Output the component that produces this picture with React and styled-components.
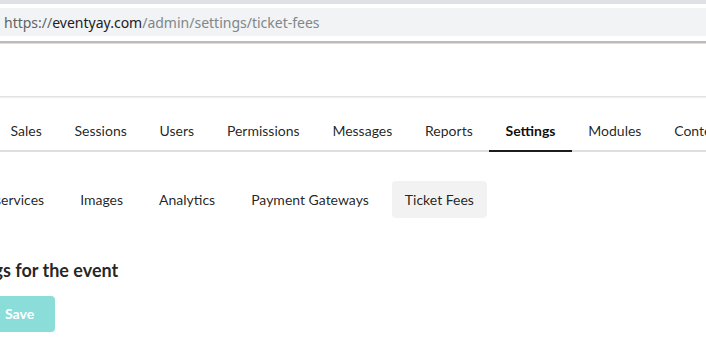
import React from "react";
import styled, { createGlobalStyle } from "styled-components";

const Global = createGlobalStyle`
  html, body { margin: 0; padding: 0; background: #fff; overflow: hidden; }
  body { font-family: Lato, "Helvetica Neue", Arial, sans-serif; font-size: 14px; }
`;

const Page = styled.div`
  width: 706px;
  height: 359px;
  overflow: hidden;
  background: #fff;
`;

const BrowserTop = styled.div`
  height: 4px;
  background: #dfe1e5;
`;

const UrlRow = styled.div`
  padding: 4px 0 5px;
  border-bottom: 2px solid #bcbcbc;
  box-shadow: 0 1px 0 #dcdcdc;
`;

const UrlField = styled.div`
  height: 28px;
  background: #f1f3f4;
  display: flex;
  align-items: center;
  padding-left: 4px;
  font-family: "Noto Sans", "Open Sans", sans-serif;
  font-size: 14px;
  color: #80868b;
  white-space: nowrap;
`;

const UrlPart = styled.span`
  color: ${(p) => p.$c};
`;

const TopBar = styled.div`
  height: 53px;
  border-bottom: 1px solid #e3e3e3;
  box-shadow: 0 1px 1px rgba(0, 0, 0, 0.06);
`;

const Main = styled.div`
  padding-top: 15px;
`;

const PointingMenu = styled.nav`
  display: flex;
  border-bottom: 2px solid rgba(34, 36, 38, 0.15);
  margin-left: ${(p) => p.$shift}px;
  width: 900px;
`;

const PointItem = styled.a`
  padding: 12px 16.4px;
  line-height: 1;
  font-size: 14px;
  white-space: nowrap;
  margin-bottom: -2px;
  border-bottom: 2px solid ${(p) => (p.$active ? "#1b1c1d" : "transparent")};
  color: ${(p) => (p.$active ? "rgba(0,0,0,0.95)" : "rgba(0,0,0,0.87)")};
  font-weight: ${(p) => (p.$active ? 700 : 400)};
`;

const SecondaryMenu = styled.nav`
  display: flex;
  margin-top: 29px;
  margin-left: ${(p) => p.$shift}px;
`;

const SecItem = styled.a`
  padding: 11.5px 13px;
  margin: 0 5px;
  line-height: 1;
  font-size: 14px;
  white-space: nowrap;
  border-radius: 4px;
  color: rgba(0, 0, 0, 0.87);
  background: ${(p) => (p.$active ? "rgba(0,0,0,0.05)" : "transparent")};
`;

const Content = styled.div`
  margin-top: 41px;
`;

const Heading = styled.h3`
  margin: 0 0 14px ${(p) => p.$shift}px;
  font-size: 18px;
  line-height: 23px;
  font-weight: 700;
  color: rgba(0, 0, 0, 0.87);
  white-space: nowrap;
`;

const SaveButton = styled.button`
  display: block;
  margin-left: -16px;
  padding: 11px 21px;
  border: 0;
  border-radius: 4px;
  background: #00b5ad;
  opacity: 0.45;
  color: #fff;
  font-family: Lato, sans-serif;
  font-weight: 700;
  font-size: 14px;
  line-height: 1;
`;

const mainItems = ["Overview", "Events", "Sales", "Sessions", "Users", "Permissions", "Messages", "Reports", "Settings", "Modules", "Content"];
const subItems = ["System", "Microservices", "Images", "Analytics", "Payment Gateways", "Ticket Fees"];

export default function App() {
  return (
    <Page>
      <Global />
      <BrowserTop />
      <UrlRow>
        <UrlField>
          <UrlPart $c="#5f6368">https://</UrlPart>
          <UrlPart $c="#202124">eventyay.com</UrlPart>
          <UrlPart $c="#80868b">/admin/settings/ticket-fees</UrlPart>
        </UrlField>
      </UrlRow>
      <TopBar />
      <Main>
        <PointingMenu $shift={-172}>
          {mainItems.map((m) => (
            <PointItem key={m} $active={m === "Settings"}>{m}</PointItem>
          ))}
        </PointingMenu>
        <SecondaryMenu $shift={-139}>
          {subItems.map((m) => (
            <SecItem key={m} $active={m === "Ticket Fees"}>{m}</SecItem>
          ))}
        </SecondaryMenu>
        <Content>
          <Heading $shift={-135}>Ticket fee settings for the event</Heading>
          <SaveButton disabled>Save</SaveButton>
        </Content>
      </Main>
    </Page>
  );
}
